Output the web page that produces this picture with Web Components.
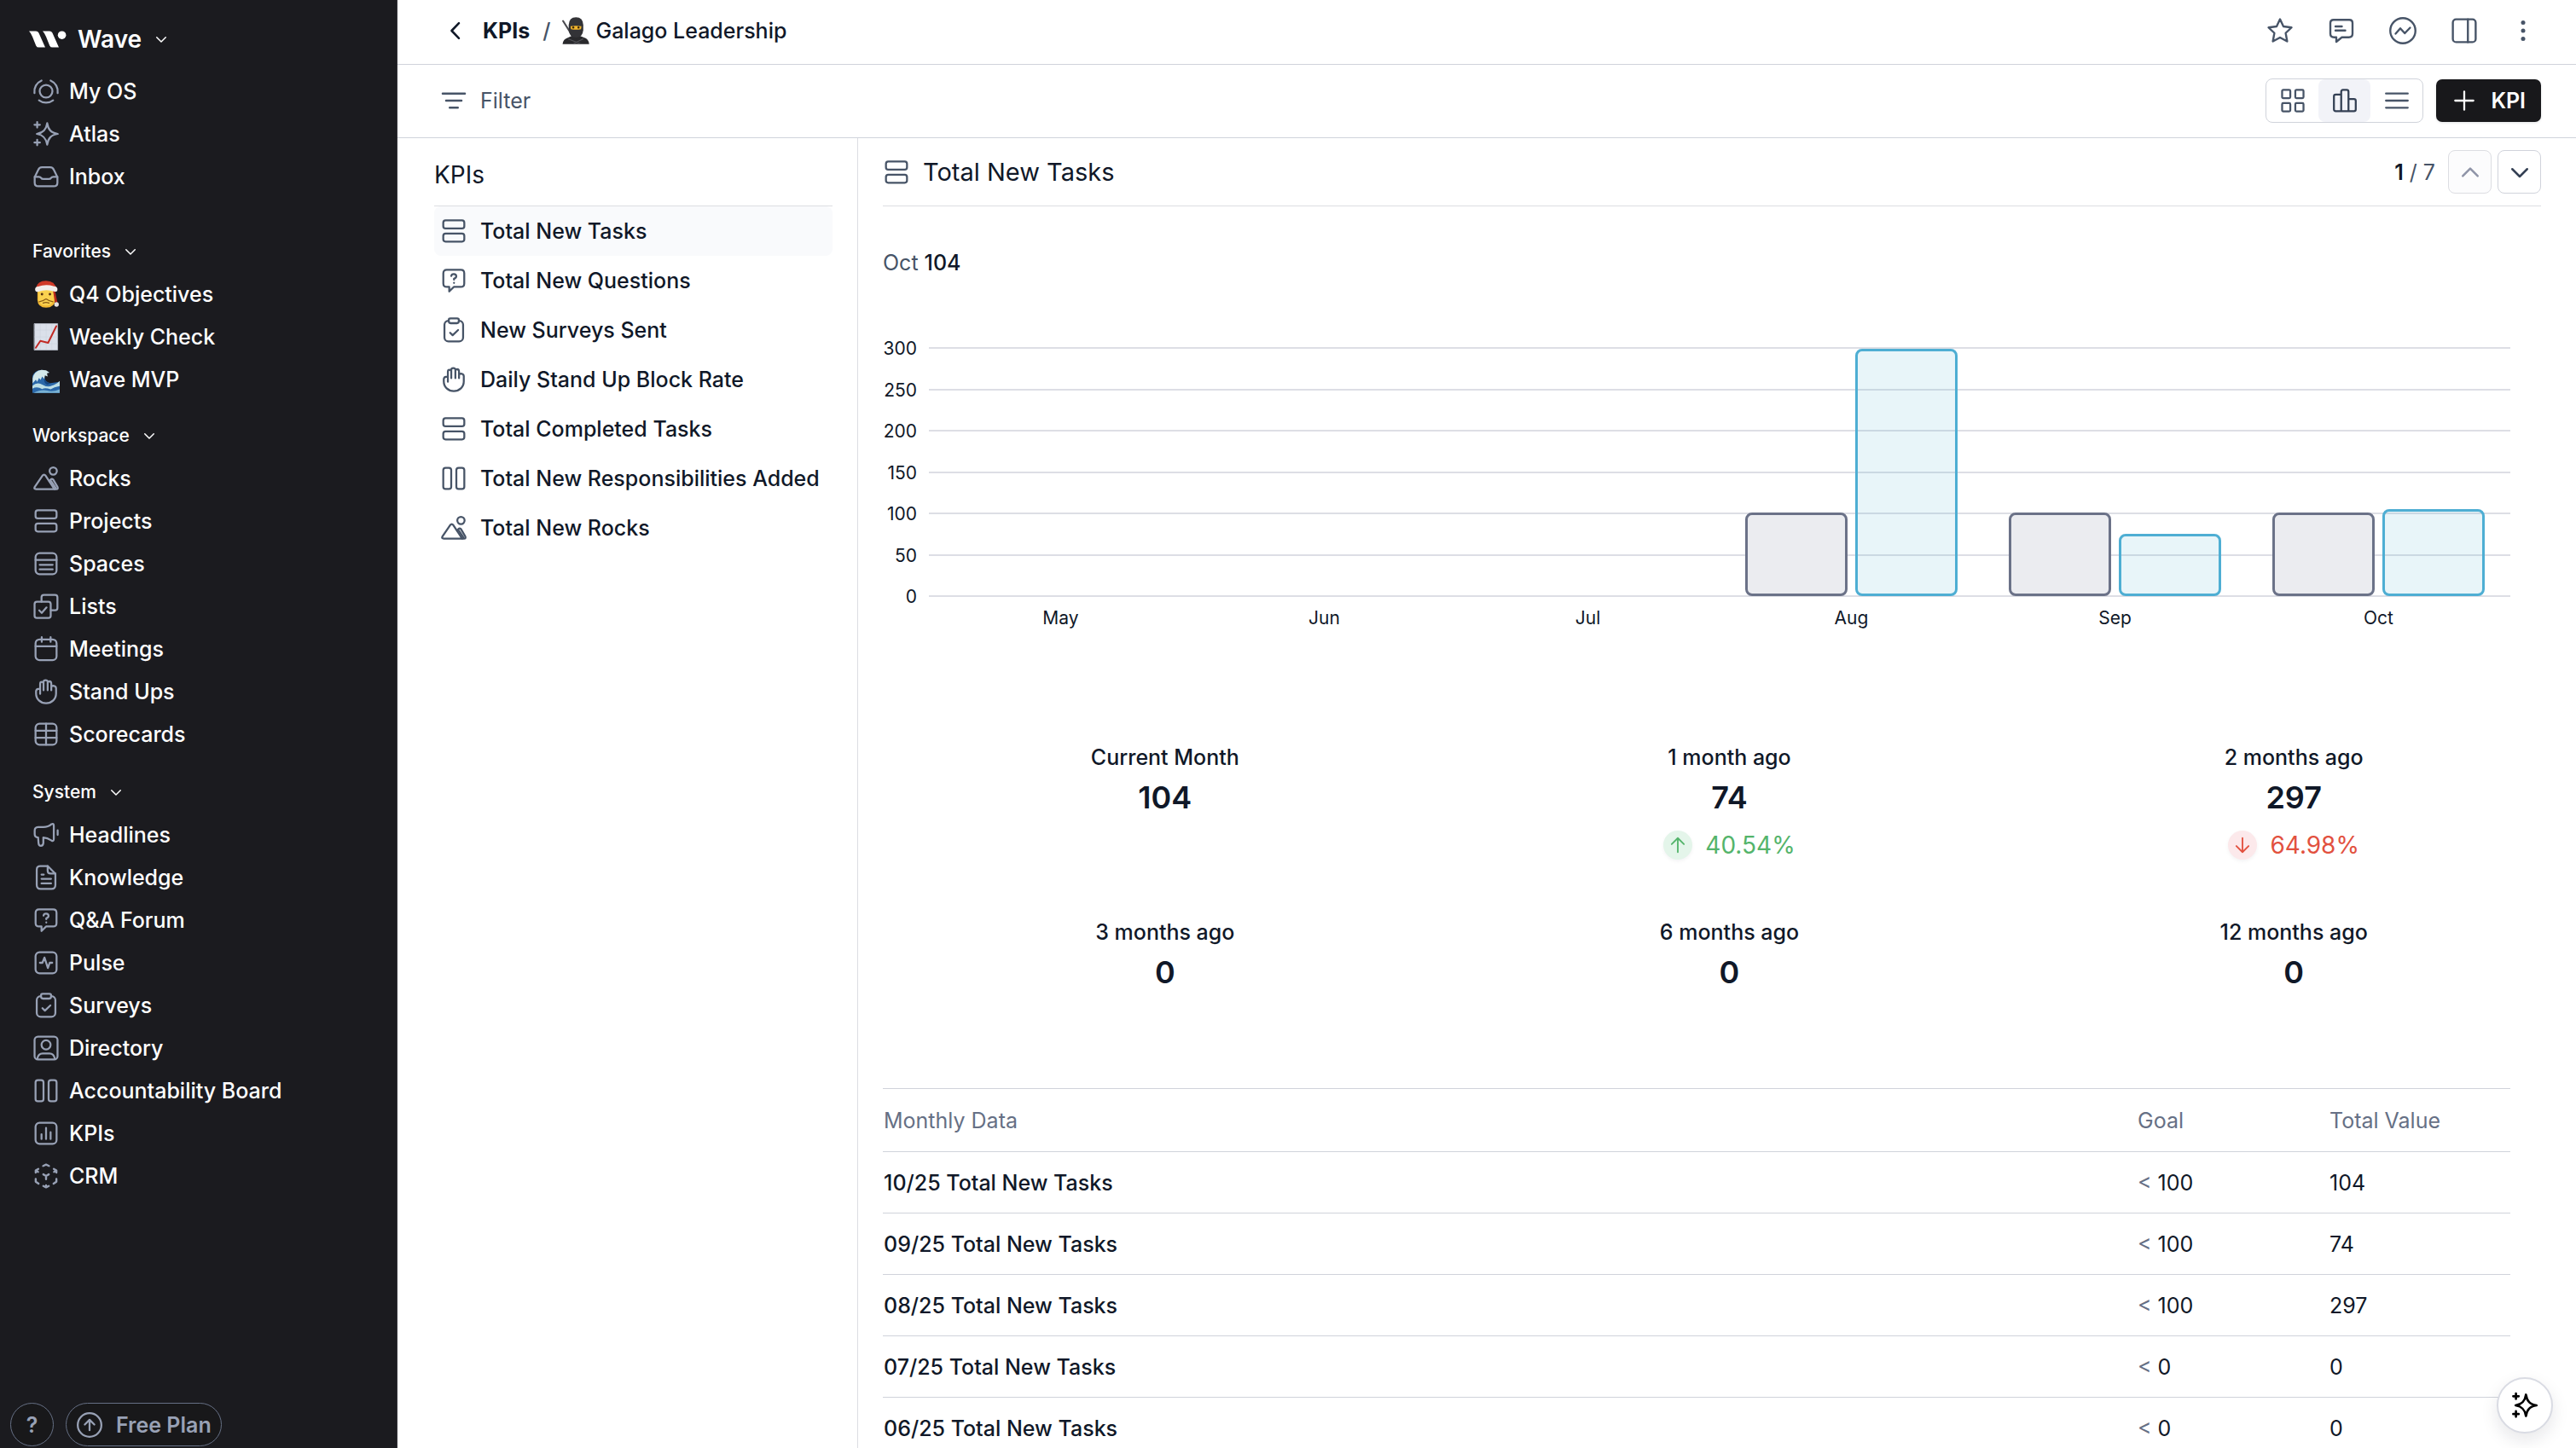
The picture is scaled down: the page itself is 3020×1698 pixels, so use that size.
<!DOCTYPE html>
<html lang="en">
<head>
<meta charset="utf-8">
<title>Wave – KPIs</title>
<style>
  html, body { margin: 0; height: 100%; }
  body {
    --ink: #101828;
    --muted: #475467;
    --soft: #667085;
    --line: #d0d3db;
    --hair: #dcdde2;
    font-family: Inter, "Liberation Sans", sans-serif;
    font-size: 25px;
    line-height: 32px;
    color: var(--ink);
    background: #fff;
    overflow: hidden;
  }
</style>
</head>
<body>
<app-shell>
  <side-nav slot="nav">
    <nav-section>
      <nav-item icon="myos">My OS</nav-item>
      <nav-item icon="sparkle">Atlas</nav-item>
      <nav-item icon="inbox">Inbox</nav-item>
    </nav-section>
    <nav-section heading="Favorites">
      <nav-item icon="santa">Q4 Objectives</nav-item>
      <nav-item icon="trend">Weekly Check</nav-item>
      <nav-item icon="wave">Wave MVP</nav-item>
    </nav-section>
    <nav-section heading="Workspace">
      <nav-item icon="rocks">Rocks</nav-item>
      <nav-item icon="rows">Projects</nav-item>
      <nav-item icon="spaces">Spaces</nav-item>
      <nav-item icon="lists">Lists</nav-item>
      <nav-item icon="calendar">Meetings</nav-item>
      <nav-item icon="hand">Stand Ups</nav-item>
      <nav-item icon="table">Scorecards</nav-item>
    </nav-section>
    <nav-section heading="System">
      <nav-item icon="megaphone">Headlines</nav-item>
      <nav-item icon="doc">Knowledge</nav-item>
      <nav-item icon="question">Q&amp;A Forum</nav-item>
      <nav-item icon="pulse">Pulse</nav-item>
      <nav-item icon="clipboard">Surveys</nav-item>
      <nav-item icon="person">Directory</nav-item>
      <nav-item icon="columns">Accountability Board</nav-item>
      <nav-item icon="kpi">KPIs</nav-item>
      <nav-item icon="crm">CRM</nav-item>
    </nav-section>
  </side-nav>
  <page-header slot="header"></page-header>
  <tool-bar slot="toolbar"></tool-bar>
  <kpi-list slot="list" heading="KPIs">
    <kpi-link icon="rows" selected>Total New Tasks</kpi-link>
    <kpi-link icon="question">Total New Questions</kpi-link>
    <kpi-link icon="clipboard">New Surveys Sent</kpi-link>
    <kpi-link icon="hand">Daily Stand Up Block Rate</kpi-link>
    <kpi-link icon="rows">Total Completed Tasks</kpi-link>
    <kpi-link icon="columns">Total New Responsibilities Added</kpi-link>
    <kpi-link icon="rocks">Total New Rocks</kpi-link>
  </kpi-list>
  <kpi-detail slot="detail">
    <bar-chart slot="chart"></bar-chart>
    <stat-card label="Current Month" value="104"></stat-card>
    <stat-card label="1 month ago" value="74" trend="up">40.54%</stat-card>
    <stat-card label="2 months ago" value="297" trend="down">64.98%</stat-card>
    <stat-card label="3 months ago" value="0"></stat-card>
    <stat-card label="6 months ago" value="0"></stat-card>
    <stat-card label="12 months ago" value="0"></stat-card>
    <month-table slot="table"></month-table>
  </kpi-detail>
</app-shell>

<script>
const ICONS = {
  myos: '<circle cx="12" cy="12" r="5.6"/><path d="M1.8 13.6A10.4 10.4 0 0 1 8 2.6M22.2 13.6A10.4 10.4 0 0 0 16 2.6M5.8 20C9.4 22.8 14.6 22.8 18.2 20"/>',
  sparkle: '<path d="M13 2.6C13.9 8.4 16.4 11 22.3 12C16.4 13 13.9 15.6 13 21.4C12.1 15.6 9.6 13 3.9 12C9.6 11 12.1 8.4 13 2.6Z"/><path d="M4.2 1.6V6.4M1.8 4H6.6M4.2 17.2V22M1.8 19.6H6.6"/>',
  inbox: '<path d="M2 12.5L5.1 6.2Q6 3.8 8.4 3.8H15.6Q18 3.8 18.9 6.2L22 12.5V17.4Q22 20.6 18.8 20.6H5.2Q2 20.6 2 17.4Z"/><path d="M2 12.2H5.6Q7 12.2 7.6 13.2T9.6 14.2H14.4Q15.8 14.2 16.4 13.2T18.4 12.2H22"/>',
  rocks: '<circle cx="18.3" cy="5.5" r="3.2"/><path d="M2 19.6L8.8 9.6Q10.2 7.8 11.6 9.6L19.4 21.4H3.2Q1 21.4 2 19.6Z"/><path d="M14.9 14.4L16.2 12.9Q17.3 11.9 18.4 13.2L22 19.4Q23 21.4 20.9 21.4H19.4"/><path d="M16.4 14.4L20.4 20.4"/>',
  rows: '<rect x="2.75" y="2.6" width="18.5" height="7" rx="2"/><rect x="2.75" y="14.2" width="18.5" height="7" rx="2"/>',
  columns: '<rect x="2.75" y="2.75" width="7" height="18.5" rx="2"/><rect x="14.25" y="2.75" width="7" height="18.5" rx="2"/>',
  spaces: '<rect x="2.75" y="2.75" width="18.5" height="18.5" rx="3.5"/><path d="M2.75 8.8H21.25M6.4 13H17.8M6.4 17H17.8"/>',
  lists: '<rect x="1.9" y="8" width="14.2" height="14.2" rx="2"/><path d="M8 8V4Q8 2 10 2H20Q22 2 22 4V13.5Q22 15.5 20 15.5H16.1"/><path d="M6 15.6L8.2 17.8L12.4 13"/>',
  calendar: '<rect x="2.75" y="3.6" width="18.5" height="18.2" rx="3.5"/><path d="M2.75 9.6H21.25M8.2 1.6V5.8M16 1.6V5.8"/>',
  hand: '<path d="M6.8 14V5.2Q6.8 3.5 8.2 3.5T9.8 5V10.8M9.8 5V3.4Q9.8 1.9 11.6 1.9T13.4 3.4V10.8M13.4 4Q13.6 3 15 3Q16.6 3 16.6 5V10.8M16.6 7.6Q17 6.8 18.4 6.8Q20.6 7 20.8 9V13.6C20.8 18.6 17 22.2 12 22.2S3.2 18.6 3.2 13.6V11.6Q3.4 9.8 5.2 9.6H6.8"/>',
  table: '<rect x="2.75" y="2.75" width="18.5" height="18.5" rx="3.5"/><path d="M12 2.75V21.25M2.75 8.9H21.25M2.75 15.1H21.25"/>',
  megaphone: '<path d="M5 5.2H9.6C13 5.2 15.2 4 16.8 2.6Q18.8 1.6 18.8 4V15.6Q18.8 18 16.8 17C14.6 15.6 12.6 14.6 9.6 14.4V19.2Q9.4 21.6 7.4 21.6Q5.6 21.6 5.4 19.4L5 14.4Q2 14 2 11.4V8.2Q2 5.4 5 5.2ZM22.2 8V12"/>',
  doc: '<path d="M6.8 1.9H13.4L20.2 8.6V18.6Q20.2 22.1 16.8 22.1H7.2Q3.8 22.1 3.8 18.6V5.2Q3.8 1.9 6.8 1.9Z"/><path d="M13.4 1.9V6Q13.4 8.6 16 8.6H20.2M8 9.4H10M8 13.2H16.4M8 17.2H16.4"/>',
  question: '<path d="M5.8 2.6H18.2Q21.2 2.6 21.2 5.6V14.6Q21.2 17.6 18.2 17.6H12L8 21.6V17.6H5.8Q2.8 17.6 2.8 14.6V5.6Q2.8 2.6 5.8 2.6Z"/><path d="M9.8 8Q10 6.2 12 6.2Q14.2 6.2 14.2 8.2Q14.2 9.6 12.2 10.4V11.2M12.2 14V14.1"/>',
  pulse: '<rect x="2.75" y="2.75" width="18.5" height="18.5" rx="3.5"/><path d="M6.6 12H8.8L10.6 7.4L13.6 16.6L15.2 12H17.4"/>',
  clipboard: '<rect x="3.8" y="3.8" width="16.4" height="18.2" rx="3.5"/><path class="fill" d="M9 1.7H15Q16.4 1.7 16.4 3V4.2Q16.4 6 14.8 6H9.2Q7.6 6 7.6 4.2V3Q7.6 1.7 9 1.7Z"/><path d="M8.8 14.4L11 16.6L15.8 12"/>',
  person: '<rect x="1.9" y="1.9" width="20.2" height="20.2" rx="3"/><circle cx="12" cy="9.2" r="4"/><path d="M4.2 21.6Q5.2 16.8 9 16.8H15Q18.8 16.8 19.8 21.6"/>',
  kpi: '<rect x="2.75" y="2.75" width="18.5" height="18.5" rx="3.5"/><path d="M8 12.8V17M12 7.2V17M16 11V17"/>',
  crm: '<path d="M9.4 3.2L12 2L14.6 3.2M2.9 9V7.2L5.2 5.8M18.8 5.8L21.1 7.2V9M2.9 14.6V17L5.4 18.8M21.1 14.6V17L18.6 18.8M9.6 20.8L12 22L14.4 20.8M12 20.2V22M9.6 10.6L12 12L14.4 10.6M12 12V14.8M3 7.2L5 8.4M21 7.2L19 8.4" stroke-width="1.8"/>',
  chevron: '<path d="M5 9L12 16L19 9" stroke-width="2"/>',
  up: '<path d="M5 15.5L12 8.5L19 15.5" stroke-width="2"/>',
  back: '<path d="M15 5.4L8.6 12L15 18.6" stroke-width="1.9"/>',
  star: '<path d="M12 1.2L15.2 8L22.8 9L17.3 14.2L18.7 22L12 18.4L5.3 22L6.7 14.2L1.2 9L8.8 8Z"/>',
  comment: '<path d="M4.6 1.8H19.4Q22.4 1.8 22.4 4.8V14.8Q22.4 18.2 19 18.2H12.4L7.2 22.4V18.2H5Q1.6 18.2 1.6 14.8V4.8Q1.6 1.8 4.6 1.8Z"/><path d="M6.4 8H12.4M6.4 11.8H15.6"/>',
  activity: '<circle cx="12" cy="12" r="11.8"/><path d="M5.2 14.8L9.6 9.8L13.8 14.4L18.8 9.2"/>',
  panel: '<rect x="1.3" y="1.3" width="21.4" height="21.4" rx="3"/><path d="M15.4 1.3V22.7"/>',
  dots: '<g fill="currentColor" stroke="none"><circle cx="12" cy="2.6" r="2.5"/><circle cx="12" cy="12" r="2.5"/><circle cx="12" cy="21.4" r="2.5"/></g>',
  filter: '<path d="M2.2 5.8H21.8M5.2 12H18.8M8.4 18.2H15.6" stroke-width="1.8"/>',
  grid: '<rect x="2.6" y="2.6" width="7.2" height="7.2" rx="1"/><rect x="14.2" y="2.6" width="7.2" height="7.2" rx="1"/><rect x="2.6" y="14.2" width="7.2" height="7.2" rx="1"/><rect x="14.2" y="14.2" width="7.2" height="7.2" rx="1"/>',
  bars: '<path d="M8.8 21.2H4Q2.4 21.2 2.4 19.6V8.2Q2.4 6.6 4 6.6H8.8M8.8 21.2V4.2Q8.8 2.6 10.4 2.6H13.6Q15.2 2.6 15.2 4.2V21.2M8.8 21.2H20Q21.6 21.2 21.6 19.6V12.2Q21.6 10.6 20 10.6H15.2"/>',
  menu: '<path d="M2.4 5.8H21.6M2.4 12H21.6M2.4 18.2H21.6" stroke-width="1.7"/>',
  plus: '<path d="M12 4V20M4 12H20" stroke-width="1.7"/>',
  circleup: '<circle cx="12" cy="12" r="10.4"/><path d="M12 16.6V7.8M7.8 11.6L12 7.4L16.2 11.6"/>',
  arrowup: '<path d="M12 19.6V4.4M5.4 11L12 4.4L18.6 11"/>',
  arrowdown: '<path d="M12 4.4V19.6M5.4 13L12 19.6L18.6 13"/>',
  santa: '<g stroke="none"><path d="M4.4 8H19.6L20 17Q19.6 23.6 12 23.8Q4.8 23.6 4.4 17Z" fill="#f3b933"/><path d="M5.4 8H18.6L18.8 17Q17.8 21.8 12 22Q6.4 21.8 5.4 17Z" fill="#fad14f"/><path d="M19.4 7L22 19.4H19.8L18 8Z" fill="#b8281c"/><path d="M3.2 6.6Q4.2 .2 12 .2Q19.8 .2 21.6 8Z" fill="#cf3a28"/><path d="M2.4 8.4Q2 5.4 5 5.2Q12 2.8 19 5Q22.4 5 22 8.4Q21.6 10.4 19 9.6Q12 7.2 5.4 9.8Q2.8 10.4 2.4 8.4Z" fill="#f1efec"/><circle cx="8.4" cy="12" r="1.1" fill="#56310f"/><circle cx="15.4" cy="12" r="1.1" fill="#56310f"/><circle cx="21.2" cy="21" r="2" fill="#e6e4e2"/></g><path d="M6 18.6Q9 18.4 12 16.2Q15 18.4 18 18.6M9.4 19.8Q12 18.6 14.6 19.8" stroke="#8a5a14" stroke-width=".9"/>',
  trend: '<rect x="1.8" y=".4" width="20.4" height="23.2" fill="#dbe0ea" stroke="#b9bfca" stroke-width=".6"/><path d="M2 12H22M2 6H22M2 18H22M7 1V23M12 1V23M17 1V23" stroke="#cdd3de" stroke-width=".4"/><path d="M3 21.6L7 15.6L13.8 17.2L21 2.6" stroke="#c22a25" stroke-width="1.5"/>',
  wave: '<g stroke="none"><path d="M0 23.8V9Q2.4 3.6 8.4 3.6L15 5.4Q10.4 6.2 10.6 10Q11 14.6 16 15.2L24 14V23.8Z" fill="#2a67a8"/><path d="M.2 11Q1.4 4.6 8 3.6L12 4L15 6L12.8 6.6L13.4 9.4L11 8.4L10.4 11.6L8.6 9.4L7.2 12.4L5.8 10.6L4.2 14L3 12.2L.2 15.4Z" fill="#d3e8ea"/><path d="M0 17.6Q4 13.8 9 16.6T17 17.4Q20.6 16.8 24 13.4V17.8Q19 18.6 16 20.6Q11 19 8.6 20.4Q4 17.8 0 20Z" fill="#bddfe6"/><path d="M1 23.8Q8 20.4 13 21.8T24 20.6V23.8Z" fill="#79b2d4"/><path d="M10.6 10Q10.8 14.8 16.4 15.4L13 16.6Q9.4 15 10.6 10Z" fill="#154781"/></g>',
  ninja: '<path d="M.8 3.4L10 18" stroke="#4b4b50" stroke-width="1.6"/><g stroke="none"><path d="M.4 23.8Q.8 19.4 5.4 18L9 16.4H15L19.2 18Q23.4 19.2 23.8 23.8Z" fill="#29292c"/><path d="M5.8 7Q6 .2 12.2 .2T18.6 7V11.4Q18 18 12.2 18T5.8 11.4Z" fill="#333337"/><path d="M7.4 8Q12 7.2 17 8L16.6 10.6Q12.2 11.6 7.8 10.6Z" fill="#f2b52c"/><circle cx="9.8" cy="9.2" r=".9" fill="#3a2409"/><circle cx="14.4" cy="9.2" r=".9" fill="#3a2409"/></g><path d="M5.6 19.4L16 23.4M18.6 19.2L10 23.4" stroke="#55555b" stroke-width=".8"/>'
};

const define = (name, html, setup, observed = []) => {
  const template = document.createElement('template');
  template.innerHTML = html;
  customElements.define(name, class extends HTMLElement {
    static observedAttributes = observed;
    constructor() {
      super();
      this.attachShadow({ mode: 'open' }).append(template.content.cloneNode(true));
    }
    connectedCallback() { if (setup) setup(this, this.shadowRoot); }
    attributeChangedCallback() { if (this.isConnected && setup) setup(this, this.shadowRoot); }
  });
};

define('ui-icon', `<style>
  :host { display: block; flex: none; width: 32px; height: 32px; }
  svg { display: block; width: 100%; height: 100%; overflow: visible; stroke-width: var(--icon-stroke, 1.7); }
  .fill { fill: var(--icon-bg, none); }
</style><svg viewBox="0 0 24 24" fill="none" stroke="currentColor" stroke-linecap="round" stroke-linejoin="round" aria-hidden="true"></svg>`,
(el, root) => { root.querySelector('svg').innerHTML = ICONS[el.getAttribute('name')] || ''; }, ['name']);

define('app-shell', `<style>
  :host { display: flex; height: 100vh; overflow: hidden; position: relative; }
  main { flex: 1; min-width: 0; display: flex; flex-direction: column; }
  .body { flex: 1; min-height: 0; display: flex; }
  slot[name=detail]::slotted(*) { flex: 1; min-width: 0; }
  .assist {
    position: absolute; right: 27px; bottom: 17px; width: 66px; height: 66px; padding: 0;
    display: grid; place-items: center; color: #000; background: #fff;
    border: 2px solid #d9dbe3; border-radius: 50%; box-shadow: 0 8px 20px rgb(16 24 40 / 10%);
    --icon-stroke: 2;
  }
</style>
<slot name="nav"></slot>
<main><slot name="header"></slot><slot name="toolbar"></slot>
  <div class="body"><slot name="list"></slot><slot name="detail"></slot></div>
</main>
<button class="assist" aria-label="Assistant"><ui-icon name="sparkle"></ui-icon></button>`);

define('side-nav', `<style>
  :host {
    --icon-bg: #1b1b1f;
    box-sizing: border-box; flex: none; width: 466px; display: flex; flex-direction: column;
    background: #1b1b1f; color: #fff; border-right: 1px solid #35353b; overflow: hidden;
  }
  button { font: inherit; color: inherit; background: none; border: 0; padding: 0; }
  .brand { display: flex; align-items: center; align-self: flex-start; height: 36px; margin: 28px 0 18px 34px; font-size: 28px; font-weight: 600; }
  .brand svg { width: 44px; height: 20px; margin-right: 13px; }
  .brand ui-icon { width: 18px; height: 18px; margin-left: 14px; }
  footer { margin-top: auto; padding: 0 0 2px 12px; display: flex; gap: 14px; color: #98a1b5; }
  footer button { box-sizing: border-box; height: 51px; border: 1px solid #667085; border-radius: 26px; background: #18181a; font-weight: 600; }
  .help { width: 51px; }
  .plan { display: flex; align-items: center; gap: 15px; padding: 0 11px; }
</style>
<button class="brand">
  <svg viewBox="0 0 44 20" fill="#fff" aria-hidden="true"><path d="M0 .4H8Q10.4 .4 11.4 2.6L19 19.6H11.4Q9.2 19.6 8.2 17.4L4 7Q2.6 3 0 .4ZM16 .4H24Q26.4 .4 27.4 2.6L35 19.6H27.4Q25.2 19.6 24.2 17.4L20 7Q18.6 3 16 .4Z"/><circle cx="38.6" cy="5.2" r="4.8"/></svg>
  Wave<ui-icon name="chevron"></ui-icon>
</button>
<slot></slot>
<footer>
  <button class="help" aria-label="Help">?</button>
  <button class="plan"><ui-icon name="circleup"></ui-icon>Free Plan</button>
</footer>`);

define('nav-section', `<style>
  :host { display: block; }
  button { display: flex; align-items: center; gap: 14px; height: 32px; margin: 25px 0 9px 38px; padding: 0; border: 0; background: none; color: #fff; font: inherit; font-size: 21px; font-weight: 500; }
  :host([heading=Favorites]) button { margin-top: 47px; }
  :host([heading=System]) button { margin-top: 27px; }
  button[hidden] { display: none; }
  ui-icon { width: 18px; height: 18px; }
  nav { display: flex; flex-direction: column; }
</style><button><span></span><ui-icon name="chevron"></ui-icon></button><nav><slot></slot></nav>`,
(el, root) => {
  const heading = el.getAttribute('heading');
  root.querySelector('button').hidden = !heading;
  root.querySelector('span').textContent = heading || '';
});

define('nav-item', `<style>
  :host { display: block; }
  a { display: flex; align-items: center; gap: 11px; height: 50px; padding-left: 38px; color: #fff; font-weight: 500; text-decoration: none; }
  ui-icon { color: #98a1b5; }
</style><a href="#"><ui-icon></ui-icon><span><slot></slot></span></a>`,
(el, root) => root.querySelector('ui-icon').setAttribute('name', el.getAttribute('icon')) );

define('page-header', `<style>
  :host { box-sizing: border-box; flex: none; display: flex; align-items: center; justify-content: space-between; height: 76px; padding: 0 49px 4px 52px; border-bottom: 1px solid var(--line); font-weight: 500; }
  nav, .actions { display: flex; align-items: center; }
  a { color: inherit; text-decoration: none; display: flex; align-items: center; }
  .root { margin: 0 15px 0 16px; font-weight: 700; }
  .sep { color: var(--muted); margin-right: 14px; }
  .here { gap: 7px; }
  .actions { gap: 40px; color: var(--muted); --icon-stroke: 1.9; }
  .actions button { display: grid; place-items: center; width: 32px; height: 32px; padding: 0; border: 0; background: none; color: inherit; }
  .actions ui-icon { width: 30px; height: 30px; }
  .actions button.more { width: 26px; }
  .more ui-icon { width: 24px; height: 24px; }
</style>
<nav><a href="#" aria-label="Back"><ui-icon name="back"></ui-icon></a><a class="root" href="#">KPIs</a><span class="sep">/</span><a class="here" href="#"><ui-icon name="ninja"></ui-icon>Galago Leadership</a></nav>
<div class="actions">
  <button aria-label="Favorite"><ui-icon name="star"></ui-icon></button>
  <button aria-label="Comments"><ui-icon name="comment"></ui-icon></button>
  <button aria-label="Activity"><ui-icon name="activity"></ui-icon></button>
  <button aria-label="Side panel"><ui-icon name="panel"></ui-icon></button>
  <button class="more" aria-label="More"><ui-icon name="dots"></ui-icon></button>
</div>`);

define('tool-bar', `<style>
  :host { box-sizing: border-box; flex: none; display: flex; align-items: center; justify-content: space-between; height: 86px; padding: 0 41px 2px 50px; border-bottom: 1px solid var(--line); }
  button { font: inherit; color: inherit; padding: 0; border: 0; background: none; display: flex; align-items: center; }
  .filter { gap: 15px; color: var(--muted); }
  .right { display: flex; align-items: center; gap: 15px; }
  .views { display: flex; border: 1px solid var(--line); border-radius: 8px; color: var(--muted); }
  .views button { width: 61px; height: 50px; justify-content: center; border-radius: 8px; }
  .views [aria-pressed=true] { background: #f2f3f8; color: #344054; }
  .add { gap: 15px; height: 50px; padding: 0 18px 0 17px; border-radius: 7px; background: #18181b; color: #fff; font-weight: 600; box-shadow: 0 1px 3px rgb(16 24 40 / 12%); }
</style>
<button class="filter"><ui-icon name="filter"></ui-icon>Filter</button>
<div class="right">
  <div class="views">
    <button aria-label="Cards" aria-pressed="false"><ui-icon name="grid"></ui-icon></button>
    <button aria-label="Chart" aria-pressed="true"><ui-icon name="bars"></ui-icon></button>
    <button aria-label="List" aria-pressed="false"><ui-icon name="menu"></ui-icon></button>
  </div>
  <button class="add"><ui-icon name="plus"></ui-icon>KPI</button>
</div>`);

define('kpi-list', `<style>
  :host { box-sizing: border-box; flex: none; width: 540px; padding: 0 29px 0 43px; border-right: 1px solid var(--hair); }
  h2 { margin: 0; height: 80px; padding-top: 6px; box-sizing: border-box; display: flex; align-items: center; font-size: 28px; font-weight: 400; border-bottom: 1px solid var(--hair); }
</style><h2></h2><nav><slot></slot></nav>`,
(el, root) => { root.querySelector('h2').textContent = el.getAttribute('heading'); });

define('kpi-link', `<style>
  :host { display: block; }
  a { display: flex; align-items: center; gap: 15px; height: 58px; padding-left: 7px; color: inherit; font-weight: 500; text-decoration: none; border-radius: 8px; white-space: nowrap; }
  :host([selected]) a { background: #f9fafc; }
  ui-icon { color: var(--muted); --icon-bg: #fff; }
</style><a href="#"><ui-icon></ui-icon><span><slot></slot></span></a>`,
(el, root) => root.querySelector('ui-icon').setAttribute('name', el.getAttribute('icon')) );

define('kpi-detail', `<style>
  :host { display: block; padding-left: 29px; overflow: hidden; }
  header { display: flex; align-items: center; justify-content: space-between; box-sizing: border-box; height: 80px; margin-right: 41px; border-bottom: 1px solid var(--hair); }
  h1 { margin: 0; display: flex; align-items: center; gap: 15px; font-size: 29px; font-weight: 400; }
  h1 ui-icon { color: var(--muted); }
  .pager { display: flex; align-items: center; gap: 7px; }
  .pager span { margin-right: 8px; color: var(--muted); }
  .pager b { color: var(--ink); font-weight: 600; }
  .pager button { box-sizing: border-box; width: 51px; height: 51px; padding: 0; display: grid; place-items: center; border: 1px solid var(--line); border-radius: 8px; background: #fff; color: #344054; }
  .pager button:disabled { background: #fcfcfd; border-color: var(--hair); color: #8f94a8; }
  .pager ui-icon { width: 30px; height: 30px; }
  .latest { margin: 50px 0 83px; color: var(--muted); }
  .latest b { color: var(--ink); font-weight: 500; }
  .stats { display: grid; grid-template: 205px 199px / repeat(3, 1fr); margin-top: 135px; }
  .scroll { margin-right: 77px; }
</style>
<header><h1><ui-icon name="rows"></ui-icon>Total New Tasks</h1>
  <div class="pager"><span><b>1</b> / 7</span>
    <button disabled aria-label="Previous KPI"><ui-icon name="up"></ui-icon></button>
    <button aria-label="Next KPI"><ui-icon name="chevron"></ui-icon></button>
  </div>
</header>
<p class="latest">Oct <b>104</b></p>
<div class="scroll"><slot name="chart"></slot></div>
<div class="stats"><slot></slot></div>
<div class="scroll"><slot name="table"></slot></div>`);

define('bar-chart', `<style>
  :host { display: grid; grid-template-columns: 40px 1fr; column-gap: 14px; font-size: 21px; line-height: 24px; }
  .axis { display: flex; flex-direction: column; justify-content: space-between; text-align: right; margin: -10px 0 -12px; }
  .plot { display: grid; height: 293px; }
  .lines, .bars { grid-area: 1 / 1; }
  .lines { display: flex; flex-direction: column; justify-content: space-between; }
  .lines i { height: 2px; background: #dddee5; }
  .bars { display: grid; grid-template-columns: repeat(6, 1fr); margin-bottom: 1px; }
  .month { display: flex; align-items: flex-end; gap: 9px; padding: 0 30px; }
  .bar { flex: 1; box-sizing: border-box; border: 3px solid #6b7288; border-radius: 8px; background: #ebecf0; }
  .bar.value { border-color: #4eaed3; background: rgb(78 174 211 / 13%); }
  .names { grid-column: 2; display: grid; grid-template-columns: repeat(6, 1fr); text-align: center; padding-top: 13px; }
</style>
<div class="axis"></div>
<div class="plot"><div class="lines"></div><div class="bars"></div></div>
<div class="names"></div>`,
(el, root) => {
  const months = [['May', 0, 0], ['Jun', 0, 0], ['Jul', 0, 0], ['Aug', 100, 297], ['Sep', 100, 74], ['Oct', 100, 104]];
  const ticks = [300, 250, 200, 150, 100, 50, 0];
  const bar = (v, kind) => v ? `<div class="bar ${kind}" style="height: calc(${v} / 300 * 100% + 1px)"></div>` : '';
  root.querySelector('.axis').innerHTML = ticks.map(t => `<span>${t}</span>`).join('');
  root.querySelector('.lines').innerHTML = ticks.map(() => '<i></i>').join('');
  root.querySelector('.bars').innerHTML = months.map(m => `<div class="month">${bar(m[1], 'goal')}${bar(m[2], 'value')}</div>`).join('');
  root.querySelector('.names').innerHTML = months.map(m => `<span>${m[0]}</span>`).join('');
});

define('stat-card', `<style>
  :host { display: flex; flex-direction: column; align-items: center; }
  .label { font-weight: 500; }
  .value { margin-top: 11px; font-size: 36px; line-height: 40px; font-weight: 600; }
  .trend { display: flex; align-items: center; gap: 15px; margin-top: 18px; font-size: 28px; line-height: 36px; color: #54b46b; }
  .trend i { display: grid; place-items: center; width: 34px; height: 34px; border-radius: 50%; background: #e4f5ea; box-shadow: 0 2px 4px rgb(16 24 40 / 5%); }
  .trend ui-icon { width: 26px; height: 26px; }
  :host([trend=down]) .trend { color: #e2513f; }
  :host([trend=down]) i { background: #fce9eb; }
</style><span class="label"></span><span class="value"></span><div class="trend"><i><ui-icon></ui-icon></i><slot></slot></div>`,
(el, root) => {
  const trend = el.getAttribute('trend');
  root.querySelector('.label').textContent = el.getAttribute('label');
  root.querySelector('.value').textContent = el.getAttribute('value');
  if (trend) root.querySelector('ui-icon').setAttribute('name', 'arrow' + trend);
  else root.querySelector('.trend').remove();
});

define('month-table', `<style>
  :host { display: block; }
  table { width: 100%; border-collapse: separate; border-spacing: 0; table-layout: fixed; border-top: 1px solid var(--line); }
  th, td { box-sizing: border-box; height: 72px; padding: 0; text-align: left; font-weight: 400; border-bottom: 1px solid var(--line); }
  th:first-child { padding-left: 1px; }
  thead th { height: 74px; color: var(--soft); }
  .goal { width: 225px; }
  .total { width: 212px; }
  tbody th { font-weight: 500; }
  i { font-style: normal; color: var(--soft); }
</style>
<table><thead><tr><th>Monthly Data</th><th class="goal">Goal</th><th class="total">Total Value</th></tr></thead><tbody></tbody></table>`,
(el, root) => {
  root.querySelector('tbody').innerHTML = [['10/25', 100, 104], ['09/25', 100, 74], ['08/25', 100, 297], ['07/25', 0, 0], ['06/25', 0, 0]]
    .map(([m, g, v]) => `<tr><th scope="row">${m} Total New Tasks</th><td><i>&lt;</i> ${g}</td><td>${v}</td></tr>`).join('');
});
</script>
</body>
</html>
